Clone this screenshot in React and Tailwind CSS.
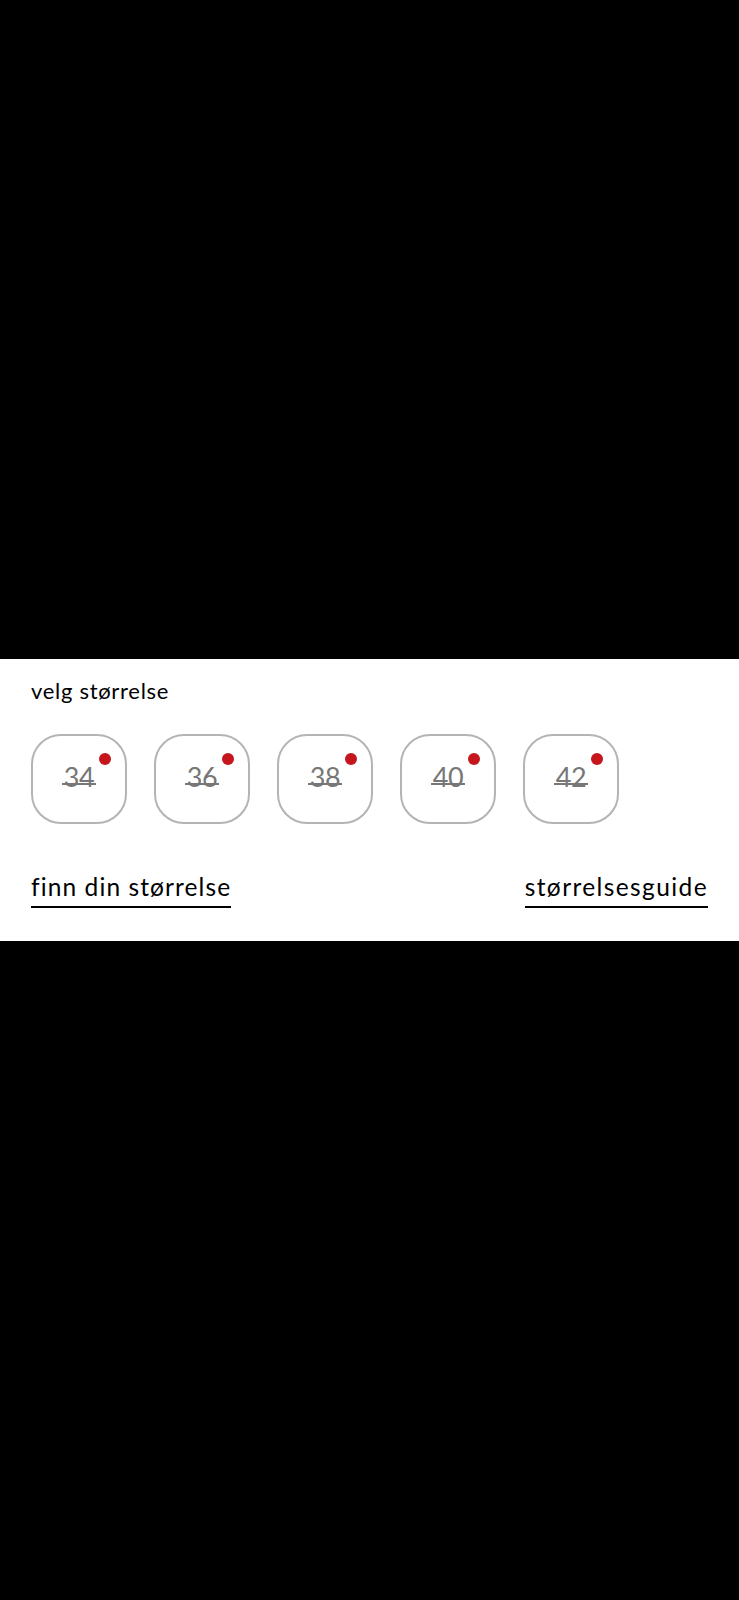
const SIZES = ['34', '36', '38', '40', '42'];

function SizeBox({ label }) {
  return (
    <button className="relative w-[96px] h-[90px] rounded-[30px] border-2 border-[#b4b4b4] bg-white flex items-center justify-center">
      <span className="absolute top-[17px] right-[14px] w-[12px] h-[12px] rounded-full bg-[#c4161c]" />
      <span className="relative mb-[6px] text-[27px] leading-none text-[#777777] tracking-[-0.3px]">
        {label}
        <span className="absolute left-[-2px] right-[-2px] bottom-[5px] h-[1.5px] bg-[#777777]" />
      </span>
    </button>
  );
}

export default function App() {
  return (
    <div className="min-h-[1600px] bg-black flex flex-col" style={{ fontFamily: "Lato, 'Noto Sans', sans-serif" }}>
      <div className="h-[659px]" />
      <section className="h-[282px] bg-white px-[31px] pt-[20px] flex flex-col">
        <h2 className="text-[22px] leading-[24px] tracking-[0.7px] text-black">velg størrelse</h2>
        <div className="mt-[31px] flex gap-[27px]">
          {SIZES.map((s) => <SizeBox key={s} label={s} />)}
        </div>
        <div className="mt-[48px] flex justify-between items-start">
          <a className="text-[24.5px] leading-[30px] tracking-[1.1px] text-black border-b-2 border-black pb-[4px]">finn din størrelse</a>
          <a className="text-[24.5px] leading-[30px] tracking-[1.4px] text-black border-b-2 border-black pb-[4px]">størrelsesguide</a>
        </div>
      </section>
      <div className="flex-1" />
    </div>
  );
}
